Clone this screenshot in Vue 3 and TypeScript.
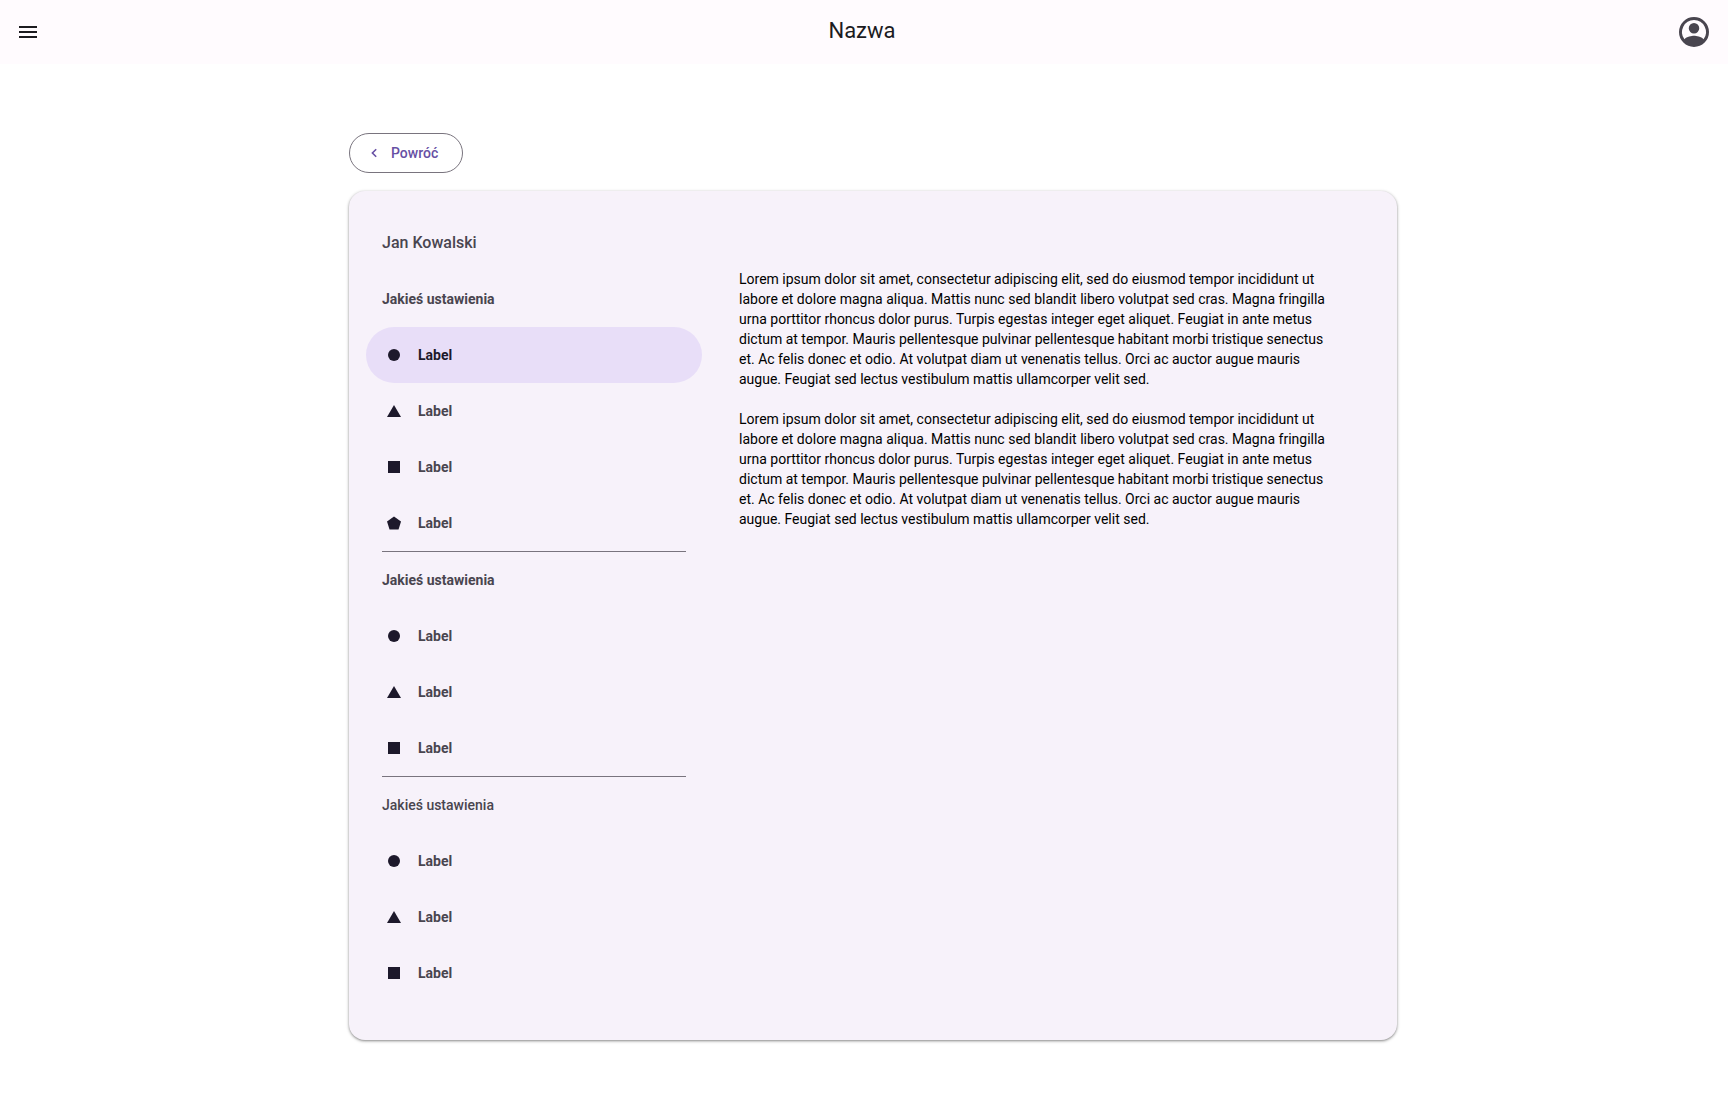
<script setup lang="ts">
type Shape = 'circle' | 'triangle' | 'square' | 'pentagon'

interface Item {
  shape: Shape
  label: string
  active?: boolean
}

interface Section {
  title: string
  strong: boolean
  items: Item[]
}

const paths: Record<Shape, string> = {
  circle: 'M12 6a6 6 0 1 0 0 12a6 6 0 1 0 0-12z',
  triangle: 'M12 6l7 12H5z',
  square: 'M6 6h12v12H6z',
  pentagon: 'M12 5.5l7 5.1L16.5 18.4h-9L5 10.6z',
}

const sections: Section[] = [
  {
    title: 'Jakieś ustawienia',
    strong: true,
    items: [
      { shape: 'circle', label: 'Label', active: true },
      { shape: 'triangle', label: 'Label' },
      { shape: 'square', label: 'Label' },
      { shape: 'pentagon', label: 'Label' },
    ],
  },
  {
    title: 'Jakieś ustawienia',
    strong: true,
    items: [
      { shape: 'circle', label: 'Label' },
      { shape: 'triangle', label: 'Label' },
      { shape: 'square', label: 'Label' },
    ],
  },
  {
    title: 'Jakieś ustawienia',
    strong: false,
    items: [
      { shape: 'circle', label: 'Label' },
      { shape: 'triangle', label: 'Label' },
      { shape: 'square', label: 'Label' },
    ],
  },
]

const lorem: string =
  'Lorem ipsum dolor sit amet, consectetur adipiscing elit, sed do eiusmod tempor incididunt ut labore et dolore magna aliqua. Mattis nunc sed blandit libero volutpat sed cras. Magna fringilla urna porttitor rhoncus dolor purus. Turpis egestas integer eget aliquet. Feugiat in ante metus dictum at tempor. Mauris pellentesque pulvinar pellentesque habitant morbi tristique senectus et. Ac felis donec et odio. At volutpat diam ut venenatis tellus. Orci ac auctor augue mauris augue. Feugiat sed lectus vestibulum mattis ullamcorper velit sed.'
const paragraphs: string[] = [lorem, lorem]
</script>

<template>
  <div class="page">
    <header class="bar">
      <button class="icon-button" type="button" aria-label="Menu">
        <svg width="24" height="24" viewBox="0 0 24 24" fill="#1c1b1f">
          <path d="M3 18h18v-2H3v2zm0-5h18v-2H3v2zm0-7v2h18V6H3z" />
        </svg>
      </button>
      <h1 class="title">Nazwa</h1>
      <button class="icon-button" type="button" aria-label="Konto">
        <svg width="36" height="36" viewBox="0 0 24 24" fill="#49454f">
          <path
            fill-rule="evenodd"
            d="M12 2a10 10 0 1 0 0 20a10 10 0 1 0 0-20zM12 4a8 8 0 0 1 6.36 12.83C16.93 15.09 13.46 14.5 12 14.5s-4.93.59-6.36 2.33A8 8 0 0 1 12 4zM12 6a3.5 3.5 0 1 0 0 7a3.5 3.5 0 1 0 0-7z"
          />
        </svg>
      </button>
    </header>

    <main class="main">
      <button class="back" type="button">
        <svg width="18" height="18" viewBox="0 0 18 18" fill="none" stroke="#6750a4" stroke-width="1.6">
          <path d="M11.2 5.2L7.4 9l3.8 3.8" />
        </svg>
        Powróć
      </button>

      <div class="card">
        <nav class="side">
          <h2 class="row name">Jan Kowalski</h2>
          <section v-for="(section, i) in sections" :key="i" class="section">
            <h3 class="row heading" :class="{ strong: section.strong }">{{ section.title }}</h3>
            <a
              v-for="(item, j) in section.items"
              :key="j"
              class="row item"
              :class="{ active: item.active }"
              href="#"
            >
              <svg width="24" height="24" viewBox="0 0 24 24" fill="#1d192b">
                <path :d="paths[item.shape]" />
              </svg>
              {{ item.label }}
            </a>
          </section>
        </nav>

        <article class="content">
          <p v-for="(text, i) in paragraphs" :key="i">{{ text }}</p>
        </article>
      </div>
    </main>
  </div>
</template>

<style>
body {
  margin: 0;
  background: #fff;
}
</style>

<style scoped>
.page {
  font-family: Roboto, 'Liberation Sans', sans-serif;
  font-size: 14px;
  line-height: 20px;
  color: #49454f;
}

.bar {
  display: flex;
  align-items: center;
  height: 64px;
  padding: 0 10px 0 4px;
  box-sizing: border-box;
  background: #fffbfe;
}

.icon-button {
  display: flex;
  align-items: center;
  justify-content: center;
  width: 48px;
  height: 48px;
  padding: 0;
  border: 0;
  background: none;
}

.title {
  flex: 1;
  margin: 0;
  padding: 0 0 2px 2px;
  text-align: center;
  font-size: 22px;
  font-weight: 400;
  line-height: 28px;
  color: #1c1b1f;
}

.main {
  max-width: 1048px;
  margin: 0 auto;
  padding: 69px 0 72px 18px;
}

.back {
  display: flex;
  align-items: center;
  gap: 8px;
  height: 40px;
  margin-bottom: 18px;
  padding: 0 24px 0 15px;
  border: 1px solid #79747e;
  border-radius: 20px;
  background: none;
  font: inherit;
  font-weight: 500;
  color: #6750a4;
}

.card {
  display: flex;
  gap: 37px;
  padding: 24px 64px 39px 17px;
  border-radius: 16px;
  background: #f7f2fa;
  box-shadow:
    0 1px 2px rgba(0, 0, 0, 0.3),
    0 1px 3px 1px rgba(0, 0, 0, 0.15);
}

.side {
  flex: 0 0 336px;
}

.row {
  display: flex;
  align-items: center;
  height: 56px;
  margin: 0;
  padding: 0 16px;
  font-size: 14px;
  font-weight: 500;
}

.row.name {
  font-size: 16px;
}

.row.strong,
.row.item {
  font-weight: 700;
}

.section + .section::before {
  content: '';
  display: block;
  height: 1px;
  margin: 0 16px;
  background: #79747e;
}

.item {
  gap: 12px;
  border-radius: 28px;
  color: inherit;
  text-decoration: none;
}

.item.active {
  background: #e8def8;
  color: #1d192b;
}

.content {
  flex: 1;
  padding-top: 54px;
  color: #000;
}

.content p {
  margin: 0 0 20px;
}
</style>
